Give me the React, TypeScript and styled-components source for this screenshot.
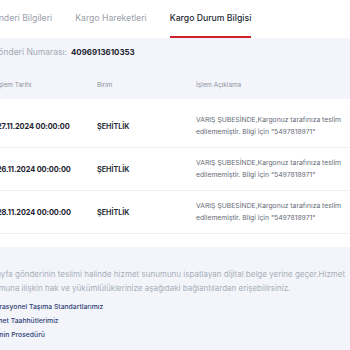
import React from 'react';
import styled, { createGlobalStyle } from 'styled-components';

const GlobalStyle = createGlobalStyle`
  * { box-sizing: border-box; margin: 0; padding: 0; }
  html, body {
    background: #fff;
    font-family: Inter, "Noto Sans", sans-serif;
    overflow: hidden;
  }
  body { width: 350px; height: 350px; }
`;

const Page = styled.div`
  margin-left: -24px;
  width: 400px;
`;

const Tabs = styled.div`
  display: flex;
  gap: 23px;
  padding-left: 11px;
  height: 38px;
  background: #fff;
`;

const Tab = styled.div<{ active?: boolean }>`
  display: flex;
  align-items: center;
  font-size: 8.7px;
  white-space: nowrap;
  color: ${(p) => (p.active ? '#262a36' : '#9ba0aa')};
  font-weight: ${(p) => (p.active ? 500 : 400)};
  border-bottom: 2px solid ${(p) => (p.active ? '#d0202a' : 'transparent')};
`;

const Panel = styled.div`
  background: #f3f5fb;
  padding-bottom: 40px;
`;

const ShipmentNo = styled.div`
  display: flex;
  gap: 4px;
  align-items: center;
  height: 28px;
  padding-left: 16px;
  font-size: 8.5px;
  color: #a3a8b2;
  b {
    color: #1d2230;
    font-weight: 700;
    font-size: 7.9px;
  }
`;

const Row = styled.div<{ head?: boolean }>`
  display: grid;
  grid-template-columns: 100px 99px 1fr;
  align-items: center;
  padding-left: 21px;
  padding-top: ${(p) => (p.head ? '5px' : '0')};
  height: ${(p) => (p.head ? '33px' : '43px')};
  background: ${(p) => (p.head ? 'transparent' : '#fff')};
  border-bottom: ${(p) => (p.head ? 'none' : '1px solid #eef0f4')};
`;

const Body = styled.div`
  background: #fff;
  padding: 6px 0 13px;
`;

const HeadCell = styled.div`
  font-size: 6.4px;
  color: #8c919b;
`;

const DateCell = styled.div`
  font-size: 7.4px;
  letter-spacing: -0.1px;
  font-weight: 700;
  color: #1d2230;
  white-space: nowrap;
`;

const UnitCell = styled.div`
  font-size: 7.2px;
  font-weight: 700;
  color: #2a2f3c;
`;

const DescCell = styled.div`
  font-size: 6.8px;
  line-height: 12px;
  color: #666b77;
  width: 148px;
`;

const Note = styled.p`
  padding: 20px 0 0 4px;
  font-size: 8px;
  line-height: 14px;
  color: #a9aeb8;
  width: 380px;
`;

const Links = styled.ul`
  list-style: none;
  padding: 7px 0 0 10px;
  display: flex;
  flex-direction: column;
  gap: 4px;
`;

const LinkItem = styled.li`
  font-size: 6.8px;
  line-height: 10px;
  color: #2f3f75;
  font-weight: 500;
`;

const rows = [
  { date: '27.11.2024 00:00:00' },
  { date: '26.11.2024 00:00:00' },
  { date: '28.11.2024 00:00:00' },
];

export default function App() {
  return (
    <>
      <GlobalStyle />
      <Page>
        <Tabs>
          <Tab>Gönderi Bilgileri</Tab>
          <Tab>Kargo Hareketleri</Tab>
          <Tab active>Kargo Durum Bilgisi</Tab>
        </Tabs>
        <Panel>
          <ShipmentNo>
            Gönderi Numarası: <b>4096913610353</b>
          </ShipmentNo>
          <Row head>
            <HeadCell>İşlem Tarihi</HeadCell>
            <HeadCell>Birim</HeadCell>
            <HeadCell>İşlem Açıklama</HeadCell>
          </Row>
          <Body>
            {rows.map((r) => (
              <Row key={r.date}>
                <DateCell>{r.date}</DateCell>
                <UnitCell>ŞEHİTLİK</UnitCell>
                <DescCell>
                  VARIŞ ŞUBESİNDE,Kargonuz tarafınıza teslim edilememiştir. Bilgi için "5497818971"
                </DescCell>
              </Row>
            ))}
          </Body>
          <Note>
            Bu sayfa gönderinin teslimi halinde hizmet sunumunu ispatlayan dijital belge yerine geçer.Hizmet
            sunumuna ilişkin hak ve yükümlülüklerinize aşağıdaki bağlantılardan erişebilirsiniz.
          </Note>
          <Links>
            <LinkItem>Operasyonel Taşıma Standartlarımız</LinkItem>
            <LinkItem>Hizmet Taahhütlerimiz</LinkItem>
            <LinkItem>Tazmin Prosedürü</LinkItem>
          </Links>
        </Panel>
      </Page>
    </>
  );
}
